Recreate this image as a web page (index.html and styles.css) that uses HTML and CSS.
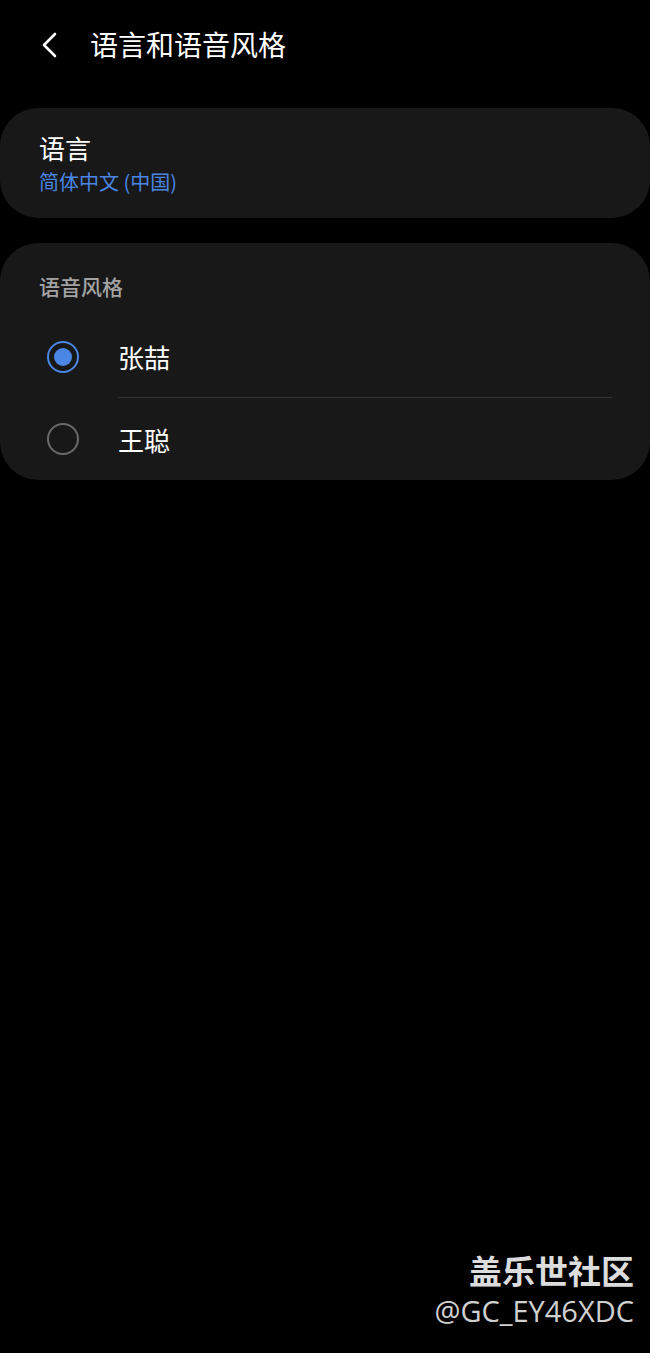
FILE: index.html
```html
<!DOCTYPE html>
<html lang="zh-CN">
<head>
  <meta charset="UTF-8" />
  <meta name="viewport" content="width=device-width, initial-scale=1.0" />
  <title>语言和语音风格</title>
  <link rel="stylesheet" href="styles.css">
</head>
<body>
  <header class="topbar">
    <svg class="back" width="20" height="28" viewBox="0 0 20 28">
      <path d="M15 3 L4 14 L15 25" fill="none" stroke="#fff" stroke-width="2.6" stroke-linecap="round" stroke-linejoin="round" />
    </svg>
    <h1>语言和语音风格</h1>
  </header>

  <section class="card lang">
    <div class="lang-title">语言</div>
    <div class="lang-value">简体中文 (中国)</div>
  </section>

  <section class="card voices">
    <div class="group-title">语音风格</div>
    <div class="row">
      <span class="radio on"></span>
      <span class="name first">张喆</span>
    </div>
    <div class="row">
      <span class="radio"></span>
      <span class="name">王聪</span>
    </div>
  </section>

  <div class="mark">
    <div class="mark-title">盖乐世社区</div>
    <div class="mark-id">@GC_EY46XDC</div>
  </div>
</body>
</html>
```

FILE: styles.css
```css
body { margin: 0; background: #000; color: #fff; font-family: "Noto Sans CJK SC", "Noto Sans", sans-serif; width: 650px; height: 1353px; position: relative; overflow: hidden; }
.topbar { display: flex; align-items: center; height: 90px; padding-left: 40px; }
.topbar .back { display: block; margin-right: 30px; }
.topbar h1 { margin: 0; font-size: 28px; font-weight: 400; line-height: 40px; margin-top: -2px; }
.card { background: #181818; border-radius: 38px; margin: 18px 0 0; }
.lang { padding: 23px 39px 23px; }
.lang-title { font-size: 26px; line-height: 34px; }
.lang-value { font-size: 20px; line-height: 26px; margin-top: 4px; color: #4a86e4; }
.voices { margin-top: 25px; padding: 29px 38px 0 0; }
.group-title { margin-left: 39px; font-size: 21px; line-height: 28px; font-weight: 500; color: #a3a3a3; margin-bottom: 15px; }
.row { display: flex; align-items: center; padding-left: 47px; }
.radio { width: 32px; height: 32px; box-sizing: border-box; border: 2px solid #6a6a6a; border-radius: 50%; margin-right: 39px; flex: none; position: relative; }
.radio.on { border-color: #4a86e4; }
.radio.on::after { content: ""; position: absolute; left: 5px; top: 5px; width: 18px; height: 18px; border-radius: 50%; background: #4a86e4; }
.name { flex: 1; height: 82px; display: flex; align-items: center; font-size: 26px; }
.name.first { border-bottom: 1px solid #333; }
.mark { position: absolute; right: 16px; bottom: 22px; text-align: right; }
.mark-title { font-size: 33px; font-weight: 700; line-height: 42px; color: #dcdcdc; }
.mark-id { font-family: "Open Sans", "Noto Sans", sans-serif; font-size: 29px; line-height: 40px; color: #d0d0d0; }
```
